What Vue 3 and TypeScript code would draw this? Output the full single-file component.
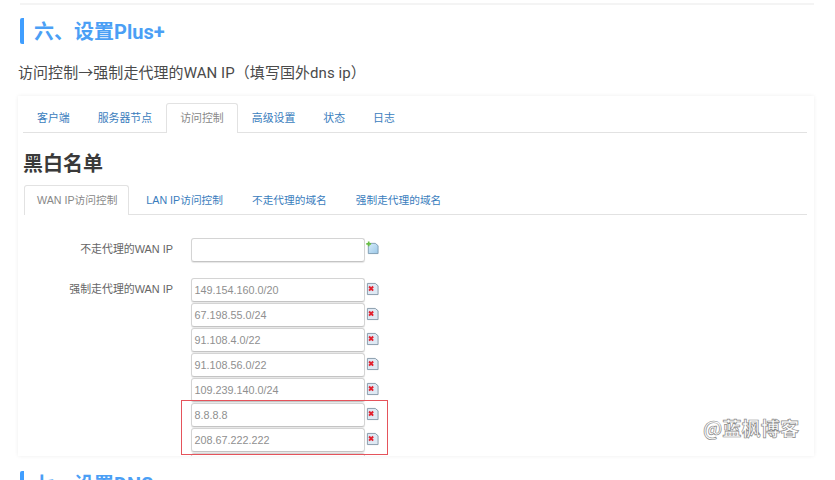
<script setup lang="ts">
const mainTabs = ['客户端', '服务器节点', '访问控制', '高级设置', '状态', '日志']
const subTabs = ['WAN IP访问控制', 'LAN IP访问控制', '不走代理的域名', '强制走代理的域名']
const ips = ['149.154.160.0/20', '67.198.55.0/24', '91.108.4.0/22', '91.108.56.0/22', '109.239.140.0/24', '8.8.8.8', '208.67.222.222', '']
</script>

<template>
  <div class="page">
    <div class="topline"></div>
    <h2 class="heading">六、设置Plus+</h2>
    <p class="intro">访问控制→强制走代理的WAN IP（填写国外dns ip）</p>
    <div class="card">
      <ul class="tabs">
        <li v-for="t in mainTabs" :key="t" :class="{ active: t === '访问控制' }">{{ t }}</li>
      </ul>
      <h3 class="title">黑白名单</h3>
      <ul class="tabs sub">
        <li v-for="t in subTabs" :key="t" :class="{ active: t === subTabs[0] }">{{ t }}</li>
      </ul>
      <div class="row first">
        <label>不走代理的WAN IP</label>
        <div class="fields">
          <div class="field">
            <div class="input"></div>
            <svg class="icon" width="13" height="14" viewBox="0 0 14 15">
              <defs>
                <linearGradient id="pageAdd" x1="0" y1="0" x2="1" y2="1">
                  <stop offset="0" stop-color="#d6ecfa" />
                  <stop offset="1" stop-color="#9cc8e8" />
                </linearGradient>
              </defs>
              <path d="M2.500 2.500h7.500l3 2.500v8.500H2.500z" fill="url(#pageAdd)" stroke="#7d9cb2" />
              <path d="M2 0.500h1.800v1.700h1.700v1.700H3.800v1.700H2V3.900H0.300V2.200H2z" fill="#69bd45" />
            </svg>
          </div>
        </div>
      </div>
      <div class="row">
        <label>强制走代理的WAN IP</label>
        <div class="fields">
          <div v-for="(ip, i) in ips" :key="i" class="field">
            <div class="input">{{ ip }}</div>
            <svg v-if="ip" class="icon del" width="13" height="14" viewBox="0 0 14 15">
              <path d="M1.500 1.500h8.500l3 2.500v9.500H1.500z" fill="#dfe9f4" stroke="#8497a8" />
              <path d="M3.300 4.800l4.400 4.400M7.700 4.800l-4.400 4.400" stroke="#e3202e" stroke-width="2.100" />
            </svg>
          </div>
          <div class="mark"></div>
        </div>
      </div>
    </div>
    <h2 class="heading next">七、设置DNS</h2>
    <div class="watermark">@蓝枫博客</div>
  </div>
</template>

<style>
html, body { margin: 0; background: #fff; }
</style>

<style scoped>
.page {
  position: relative;
  width: 835px;
  height: 480px;
  overflow: hidden;
  box-sizing: border-box;
  padding: 3px 21px 0 18px;
  background: #fff;
  font-family: "Liberation Sans", "Noto Sans CJK SC", sans-serif;
}
.topline { height: 2px; margin-left: 2px; background: #f4f4f4; }
.heading {
  margin: 13px 0 0 2px;
  height: 26px;
  padding-left: 10px;
  border-left: 4px solid #409eff;
  border-radius: 2px;
  font-family: Roboto, "Noto Sans CJK SC", sans-serif;
  font-size: 20px;
  line-height: 28px;
  font-weight: 700;
  color: #4b9ff5;
}
.heading.next { margin-top: 15px; }
.intro {
  margin: 20px 0 0;
  height: 18px;
  font-family: Roboto, "Noto Sans CJK SC", sans-serif;
  font-size: 15px;
  letter-spacing: 0.06px;
  line-height: 18px;
  color: #4a4a4a;
}
.card {
  margin-top: 14px;
  height: 360px;
  box-sizing: border-box;
  padding: 7px 7px 0 5px;
  overflow: hidden;
  box-shadow: 0 0 4px rgba(0, 0, 0, 0.07);
  background: #fff;
}
.tabs {
  display: flex;
  margin: 0;
  padding: 0;
  list-style: none;
  border-bottom: 1px solid #e2e2e2;
  height: 29px;
}
.tabs li {
  box-sizing: border-box;
  height: 30px;
  padding: 0 13px;
  border: 1px solid transparent;
  border-bottom: 0;
  font-size: 10.9px;
  line-height: 28px;
  color: #3a7dbd;
  white-space: nowrap;
}
.tabs li.active {
  border-color: #e2e2e2;
  border-radius: 3px 3px 0 0;
  background: #fff;
  color: #888;
}
.tabs.sub { margin-left: 1px; }
.tabs.sub li { padding: 0 13.5px; font-size: 10.7px; }
.tabs.sub li.active { padding: 0 11px 0 12px; margin-right: 2.5px; }
.title {
  margin: 17px 0 7px 0;
  font-size: 20px;
  line-height: 28px;
  height: 28px;
  font-weight: 700;
  color: #3a3a3a;
}
.row {
  display: flex;
  margin-top: 15px;
}
.row.first { margin-top: 23px; }
.row label {
  width: 150px;
  padding-top: 4px;
  margin-right: 18px;
  text-align: right;
  font-size: 10.9px;
  line-height: 14px;
  color: #666;
}
.fields { position: relative; }
.field {
  display: flex;
  align-items: flex-start;
  height: 25px;
}
.input {
  box-sizing: border-box;
  width: 174px;
  height: 24px;
  padding-left: 2.500px;
  border: 1px solid #d4d4d4;
  border-bottom-color: #c4c4c4;
  border-radius: 3px;
  box-shadow: 0 1px 1px rgba(0, 0, 0, 0.1);
  font-size: 10.8px;
  line-height: 22px;
  color: #8f8f8f;
}
.icon { margin: 3px 0 0 1px; flex: none; }
.icon.del { margin-top: 4px; }
.mark {
  position: absolute;
  left: -10px;
  top: 122px;
  width: 205px;
  height: 53px;
  border: 1px solid #e5535b;
  pointer-events: none;
}
.watermark {
  position: absolute;
  left: 703px;
  top: 417px;
  font-size: 19.2px;
  line-height: 22px;
  font-weight: 700;
  color: #fff;
  -webkit-text-stroke: 0.7px #8a8a8a;
  font-family: "Noto Sans CJK SC", sans-serif;
}
</style>
